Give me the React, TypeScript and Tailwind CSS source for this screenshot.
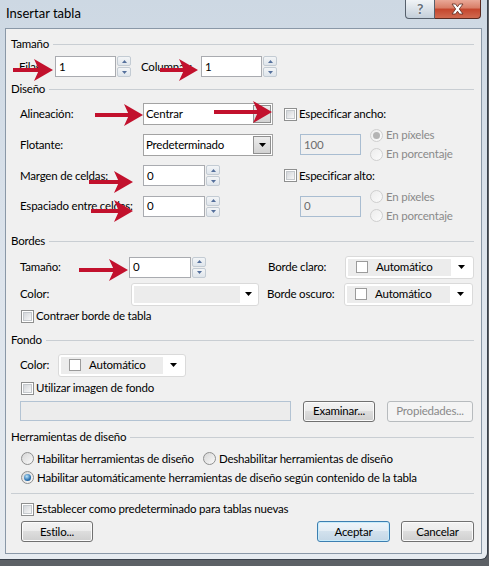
import React from "react";

const Tri = () => (
  <svg width="7" height="4" viewBox="0 0 7 4" className="shrink-0">
    <polygon points="0,0 7,0 3.5,4" fill="#000" />
  </svg>
);

const Check = () => (
  <span className="w-[13px] h-[13px] shrink-0 border border-[#8e8f8f] bg-white p-[1px]">
    <span className="block w-full h-full border border-[#c4c8cc] bg-gradient-to-br from-[#d3d6da] to-[#f7f7f7]" />
  </span>
);

const Radio = ({ checked, disabled }: { checked?: boolean; disabled?: boolean }) => (
  <span
    className={
      "w-[13px] h-[13px] shrink-0 rounded-full border flex items-center justify-center " +
      (disabled
        ? "border-[#cfcfcf] bg-gradient-to-br from-[#ececec] to-[#fbfbfb]"
        : "border-[#8e8f8f] bg-gradient-to-br from-[#d6d6d6] to-[#fafafa]")
    }
  >
    {checked && (
      <span
        className={
          "w-[7px] h-[7px] rounded-full " +
          (disabled
            ? "bg-[#b4b4b4]"
            : "bg-[radial-gradient(circle_at_40%_35%,#bde6fb,#2a70b0_60%,#17497e)]")
        }
      />
    )}
  </span>
);

const Spin = () => (
  <div className="ml-[1px] w-[14px] h-[21px] flex flex-col gap-[1px] shrink-0">
    <div className="flex-1 rounded-[2px] border border-[#c3cbd3] bg-gradient-to-b from-[#f3f5f7] to-[#dfe5eb] flex items-center justify-center">
      <svg width="5" height="3" viewBox="0 0 5 3">
        <polygon points="0,3 5,3 2.5,0" fill="#55709c" />
      </svg>
    </div>
    <div className="flex-1 rounded-[2px] border border-[#c3cbd3] bg-gradient-to-b from-[#f3f5f7] to-[#dfe5eb] flex items-center justify-center">
      <svg width="5" height="3" viewBox="0 0 5 3">
        <polygon points="0,0 5,0 2.5,3" fill="#55709c" />
      </svg>
    </div>
  </div>
);

const Input = ({ value, w, h = "h-[21px]" }: { value: string; w: string; h?: string }) => (
  <div className={`${w} ${h} shrink-0 border border-[#a9abb0] bg-white flex items-center pl-[3px]`}>
    {value}
  </div>
);

const Disabled = ({ value }: { value: string }) => (
  <div className="w-[61px] shrink-0 h-[21px] border border-[#a9bdd1] bg-[#f0f0f0] text-[#6d6d6d] flex items-center pl-[3px]">
    {value}
  </div>
);

const Select = ({ value }: { value: string }) => (
  <div className="w-[130px] h-[22px] shrink-0 border border-[#a3a3a3] bg-white flex items-center pl-[2px] pr-[1px]">
    <span className="flex-1">{value}</span>
    <div className="w-[18px] h-[18px] border border-[#8f8f8f] bg-gradient-to-b from-[#ececec] to-[#d2d2d2] flex items-center justify-center">
      <Tri />
    </div>
  </div>
);

const Combo = ({ w, auto }: { w: string; auto?: boolean }) => (
  <div className={`${w} h-[23px] shrink-0 rounded-[3px] border border-[#dadada] bg-white p-[2px] flex`}>
    <div className="flex-1 bg-[#ececec] flex items-center pl-[8px]">
      {auto && (
        <>
          <span className="w-[12px] h-[12px] border border-[#9b9b9b] bg-white" />
          <span className="ml-[8px]">Automático</span>
        </>
      )}
    </div>
    <div className={(auto ? "w-[20px]" : "w-[16px]") + " flex items-center justify-center"}>
      <Tri />
    </div>
  </div>
);

const Btn = ({
  children,
  w,
  primary,
  disabled,
}: {
  children: React.ReactNode;
  w: string;
  primary?: boolean;
  disabled?: boolean;
}) => (
  <div
    className={
      `${w} h-[21px] shrink-0 rounded-[3px] border flex items-center justify-center ` +
      (disabled
        ? "border-[#b7bbbe] bg-[#f4f4f4] text-[#8a8a8a]"
        : primary
          ? "border-[#3c7fb1] bg-[linear-gradient(#eef5fa,#e2ecf4_50%,#d2e1ed_50%,#c4d7e6)] shadow-[inset_0_0_0_1px_#c8ecfb]"
          : "border-[#707070] bg-[linear-gradient(#f2f2f2,#ebebeb_50%,#dddddd_50%,#cfcfcf)] shadow-[inset_0_0_0_1px_#fbfbfb]")
    }
  >
    {children}
  </div>
);

const Group = ({ title }: { title: string }) => (
  <div className="flex items-center h-[16px]">
    <span className="pr-[4px]">{title}</span>
    <div className="flex-1 border-t border-[#c9ced3]" />
  </div>
);

const Arrow = ({ className, len }: { className: string; len: number }) => (
  <svg className={"absolute h-[24px] " + className} viewBox={`0 0 ${len} 24`}>
    <rect x="0" y="10" width={len - 12} height="4" fill="#c2112d" />
    <polygon
      points={`${len},12 ${len - 19},1 ${len - 14},12 ${len - 19},23`}
      fill="#c2112d"
    />
  </svg>
);

export default function App() {
  return (
    <div className="w-[489px] h-[566px] relative overflow-hidden bg-[#5d6166] font-['Lato',sans-serif] text-[11.5px] tracking-[-0.2px] text-black leading-none whitespace-nowrap">
      <div className="w-[488px] h-[560px] rounded-br-[7px] border-r border-b border-[#39414b] bg-gradient-to-b from-[#cdd8e3] via-[#dde4ec] to-[#e6ebf0] pl-[5px] pr-[5px] pb-[5px] flex flex-col">
        {/* title bar */}
        <div className="h-[28px] flex items-start justify-between">
          <span className="mt-[7px] ml-[1px] text-[13px] tracking-normal">Insertar tabla</span>
          <div className="flex mr-[1px]">
            <div className="w-[30px] h-[19px] rounded-bl-[4px] border border-t-0 border-[#56606c] bg-gradient-to-b from-[#f1f4f7] to-[#c4cfda] flex items-center justify-center text-[14px] font-bold text-[#66707a] [text-shadow:0_0_2px_#fff]">
              ?
            </div>
            <div className="w-[46px] h-[19px] rounded-br-[4px] border border-l-0 border-t-0 border-[#5b2a20] bg-[linear-gradient(#e9a897,#d87d66_45%,#c4452c_50%,#d06a50)] flex items-center justify-center">
              <svg width="15" height="12" viewBox="0 0 15 12">
                <path
                  d="M2 1 L5.5 1 L7.5 3.8 L9.5 1 L13 1 L9.3 6 L13 11 L9.5 11 L7.5 8.2 L5.5 11 L2 11 L5.7 6 Z"
                  fill="#fff"
                  stroke="#5b2a20"
                  strokeWidth="0.8"
                />
              </svg>
            </div>
          </div>
        </div>

        {/* content */}
        <div className="flex-1 bg-[#f0f0f0] border border-[#8a98a7] pl-[5px] pr-[7px] pt-[7px]">
          <Group title="Tamaño" />
          <div className="mt-[4px] h-[21px] flex items-center ml-[8px]">
            <span className="w-[36px]">Filas:</span>
            <Input value="1" w="w-[61px]" />
            <Spin />
            <span className="ml-[10px] w-[60px]">Columnas:</span>
            <Input value="1" w="w-[61px]" />
            <Spin />
          </div>

          <div className="mt-[4px]">
            <Group title="Diseño" />
          </div>
          <div className="mt-[2px] flex ml-[9px]">
            <div className="w-[264px] flex flex-col">
              <div className="h-[30px] flex items-center">
                <span className="w-[123px]">Alineación:</span>
                <Select value="Centrar" />
              </div>
              <div className="h-[31px] flex items-center">
                <span className="w-[123px]">Flotante:</span>
                <Select value="Predeterminado" />
              </div>
              <div className="h-[31px] flex items-center">
                <span className="w-[123px]">Margen de celdas:</span>
                <Input value="0" w="w-[62px]" />
                <Spin />
              </div>
              <div className="h-[30px] flex items-center">
                <span className="w-[123px]">Espaciado entre celdas:</span>
                <Input value="0" w="w-[62px]" />
                <Spin />
              </div>
            </div>
            <div className="flex flex-col">
              <div className="h-[30px] flex items-center gap-[2px]">
                <Check />
                <span>Especificar ancho:</span>
              </div>
              <div className="h-[31px] flex items-center ml-[16px]">
                <Disabled value="100" />
                <div className="ml-[9px] flex flex-col text-[#8a8a8a]">
                  <div className="h-[19px] flex items-center gap-[3px]">
                    <Radio checked disabled />
                    <span>En píxeles</span>
                  </div>
                  <div className="h-[19px] flex items-center gap-[3px]">
                    <Radio disabled />
                    <span>En porcentaje</span>
                  </div>
                </div>
              </div>
              <div className="h-[31px] flex items-center gap-[2px]">
                <Check />
                <span>Especificar alto:</span>
              </div>
              <div className="h-[30px] flex items-center ml-[16px]">
                <Disabled value="0" />
                <div className="ml-[9px] flex flex-col text-[#8a8a8a]">
                  <div className="h-[19px] flex items-center gap-[3px]">
                    <Radio disabled />
                    <span>En píxeles</span>
                  </div>
                  <div className="h-[19px] flex items-center gap-[3px]">
                    <Radio disabled />
                    <span>En porcentaje</span>
                  </div>
                </div>
              </div>
            </div>
          </div>

          <div className="mt-[12px]">
            <Group title="Bordes" />
          </div>
          <div className="mt-[6px] h-[24px] flex items-center ml-[9px]">
            <span className="w-[109px]">Tamaño:</span>
            <Input value="0" w="w-[62px]" />
            <Spin />
            <span className="ml-[62px] w-[77px]">Borde claro:</span>
            <Combo w="w-[129px]" auto />
          </div>
          <div className="mt-[3px] h-[24px] flex items-center ml-[9px]">
            <span className="w-[111px]">Color:</span>
            <Combo w="w-[128px]" />
            <span className="ml-[8px] w-[77px]">Borde oscuro:</span>
            <Combo w="w-[129px]" auto />
          </div>
          <div className="mt-[1px] h-[18px] flex items-center gap-[2px] ml-[10px]">
            <Check />
            <span>Contraer borde de tabla</span>
          </div>

          <div className="mt-[7px]">
            <Group title="Fondo" />
          </div>
          <div className="mt-[5px] h-[24px] flex items-center ml-[9px]">
            <span className="w-[38px]">Color:</span>
            <Combo w="w-[128px]" auto />
          </div>
          <div className="mt-[2px] h-[18px] flex items-center gap-[2px] ml-[10px]">
            <Check />
            <span>Utilizar imagen de fondo</span>
          </div>
          <div className="mt-[3px] h-[22px] flex items-center ml-[9px]">
            <div className="w-[271px] h-[20px] border border-[#b3c3d3] bg-[#ececec]" />
            <div className="ml-[12px]">
              <Btn w="w-[72px]">Examinar...</Btn>
            </div>
            <div className="ml-[12px]">
              <Btn w="w-[86px]" disabled>
                Propiedades...
              </Btn>
            </div>
          </div>

          <div className="mt-[7px]">
            <Group title="Herramientas de diseño" />
          </div>
          <div className="mt-[4px] h-[19px] flex items-center ml-[10px]">
            <div className="w-[182px] flex items-center gap-[3px]">
              <Radio />
              <span>Habilitar herramientas de diseño</span>
            </div>
            <div className="flex items-center gap-[3px]">
              <Radio />
              <span>Deshabilitar herramientas de diseño</span>
            </div>
          </div>
          <div className="h-[19px] flex items-center gap-[3px] ml-[10px]">
            <Radio checked />
            <span>Habilitar automáticamente herramientas de diseño según contenido de la tabla</span>
          </div>
          <div className="mt-[6px] border-t border-[#c9ced3]" />
          <div className="mt-[6px] h-[18px] flex items-center gap-[2px] ml-[10px]">
            <Check />
            <span>Establecer como predeterminado para tablas nuevas</span>
          </div>
          <div className="mt-[3px] flex items-center justify-between ml-[10px]">
            <Btn w="w-[72px]">Estilo...</Btn>
            <div className="flex gap-[11px]">
              <Btn w="w-[73px]" primary>
                Aceptar
              </Btn>
              <Btn w="w-[73px]">Cancelar</Btn>
            </div>
          </div>
        </div>
      </div>

      {/* red annotation arrows */}
      <Arrow className="left-[13px] top-[58px] w-[40px]" len={40} />
      <Arrow className="left-[160px] top-[58px] w-[38px]" len={38} />
      <Arrow className="left-[95px] top-[103px] w-[48px]" len={48} />
      <Arrow className="left-[214px] top-[100px] w-[58px]" len={58} />
      <Arrow className="left-[89px] top-[170px] w-[44px]" len={44} />
      <Arrow className="left-[91px] top-[199px] w-[42px]" len={42} />
      <Arrow className="left-[79px] top-[258px] w-[49px]" len={49} />
    </div>
  );
}
